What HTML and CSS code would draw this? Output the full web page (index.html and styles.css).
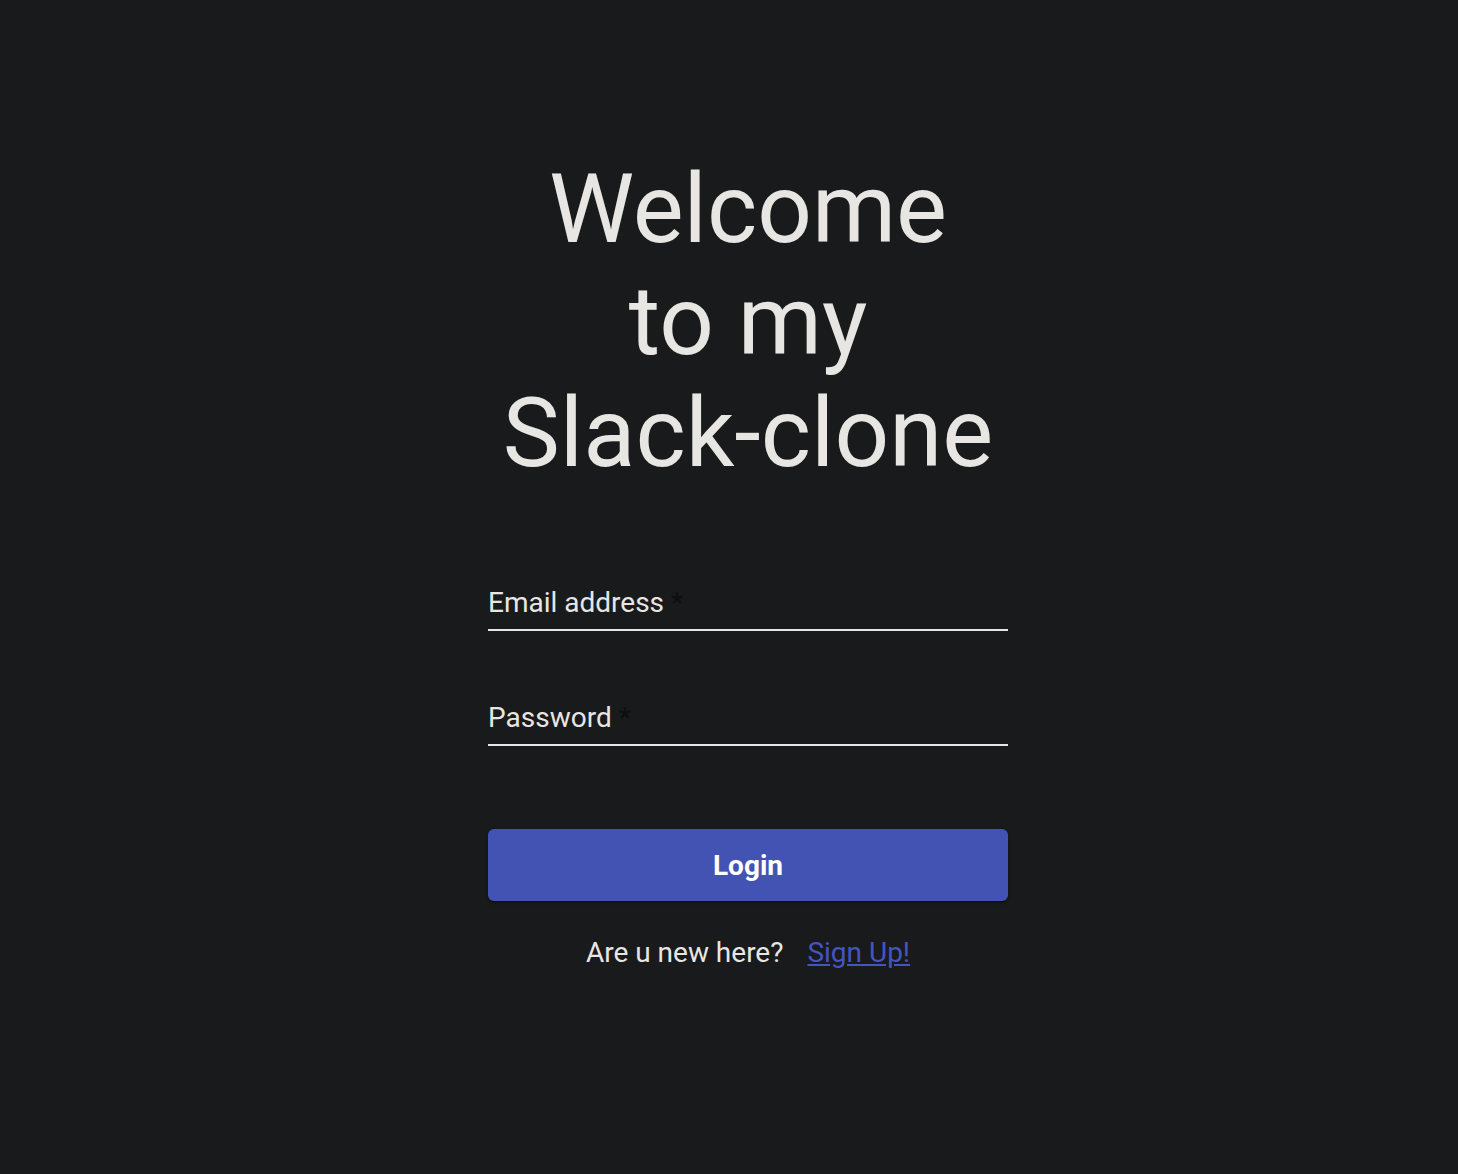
FILE: index.html
```html
<!DOCTYPE html>
<html lang="en">
<head>
<meta charset="utf-8">
<title>Slack-clone</title>
<link rel="stylesheet" href="styles.css">
</head>
<body>
<main class="page">
  <h1 class="title">Welcome<br>to my<br>Slack-clone</h1>
  <form class="form">
    <div class="field">
      <label class="label">Email address <span class="req">*</span></label>
    </div>
    <div class="field field-second">
      <label class="label">Password <span class="req">*</span></label>
    </div>
    <button type="button" class="btn">Login</button>
    <p class="signup">Are u new here? <a class="link" href="#">Sign Up!</a></p>
  </form>
</main>
</body>
</html>
```
FILE: styles.css
```css
html, body {
  margin: 0;
  padding: 0;
  background: #181a1b;
  color: #e8e6e3;
  font-family: Roboto, "Liberation Sans", Arial, sans-serif;
}
.page {
  min-height: 1174px;
  box-sizing: border-box;
  padding: 153px 0 0 38px;
  display: flex;
  flex-direction: column;
  align-items: center;
}
.title {
  margin: 0;
  font-size: 96px;
  line-height: 112px;
  font-weight: 400;
  text-align: center;
  color: #e8e6e3;
}
.form {
  width: 520px;
  margin-top: 100px;
  display: flex;
  flex-direction: column;
}
.field {
  border-bottom: 2px solid #e8e6e3;
  padding-bottom: 12px;
}
.field-second {
  margin-top: 73px;
}
.label {
  display: block;
  font-size: 28px;
  line-height: 28px;
  color: #e8e6e3;
}
.req {
  color: #0d0e0f;
}
.btn {
  margin-top: 83px;
  height: 72px;
  border: none;
  border-radius: 6px;
  background: #4353b3;
  color: #ffffff;
  font-family: Roboto, "Liberation Sans", Arial, sans-serif;
  font-size: 28px;
  font-weight: 700;
  box-shadow: 0 3px 1px -2px rgba(0,0,0,0.2), 0 2px 2px 0 rgba(0,0,0,0.14), 0 1px 5px 0 rgba(0,0,0,0.12);
  cursor: pointer;
}
.signup {
  margin: 38px 0 0;
  font-size: 28px;
  line-height: 28px;
  text-align: center;
  color: #e8e6e3;
}
.link {
  margin-left: 17px;
  color: #4555c0;
  text-decoration: underline;
}
```
